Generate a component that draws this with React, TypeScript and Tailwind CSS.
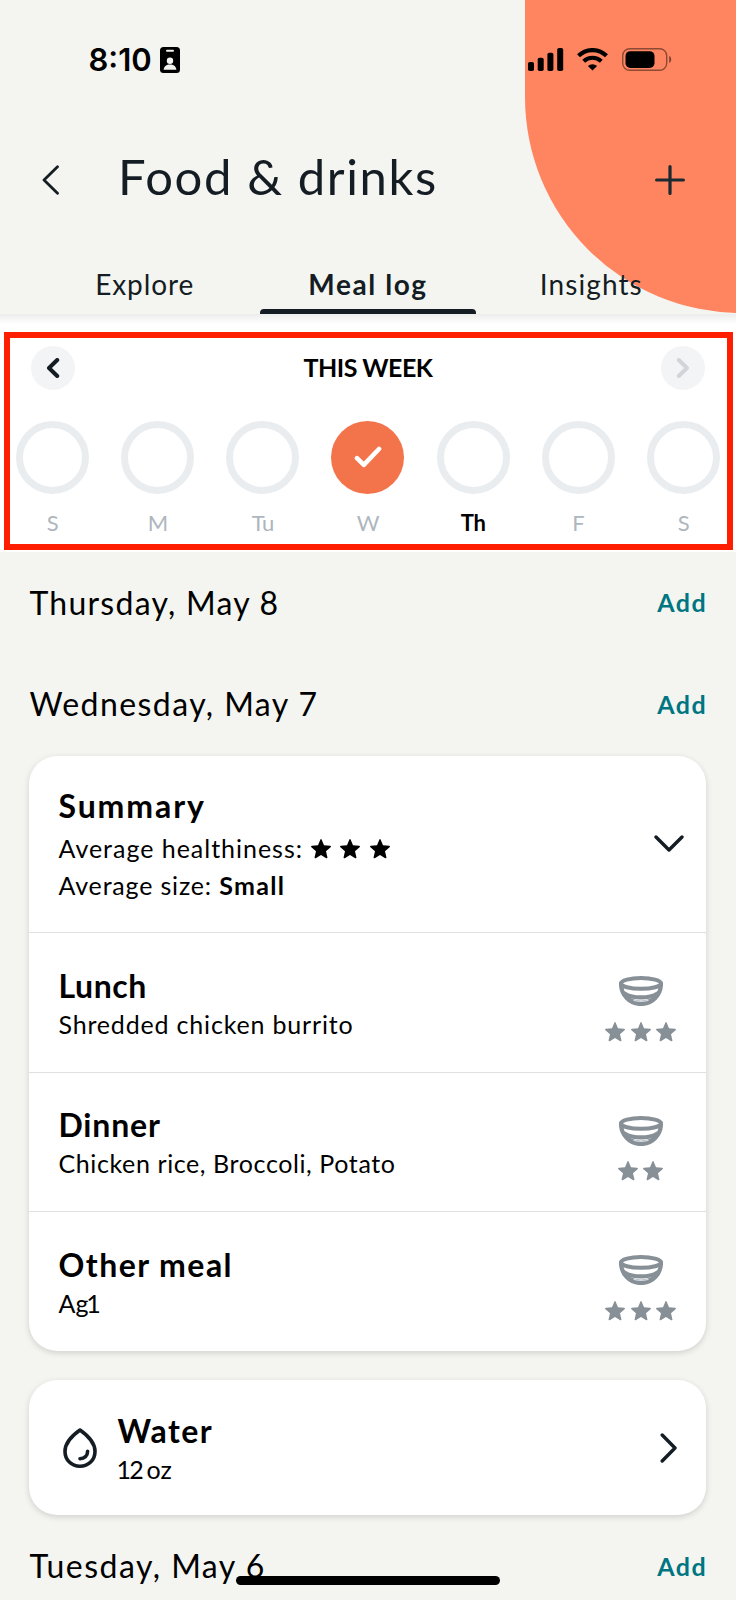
import type { ReactNode } from "react";

const STAR =
  "M10 .1c.35 0 .55.2.7.55l2.300 5.650 6.100.5c.9.1 1.150.9.5 1.450l-4.600 4 1.400 6c.2.85-.5 1.300-1.200.9L10 15.900l-5.200 3.250c-.7.4-1.400-.05-1.200-.9l1.400-6-4.600-4c-.65-.55-.4-1.350.5-1.450l6.100-.5L9.300.65C9.450.3 9.650.1 10 .1Z";

function Star({ className }: { className: string }) {
  return (
    <svg viewBox="0 0 20 20" className={`h-5 w-5 shrink-0 ${className}`} fill="currentColor">
      <path d={STAR} />
    </svg>
  );
}

function Bowl() {
  return (
    <svg viewBox="0 0 44 30" className="h-[30px] w-11 text-[#878f97]" fill="none" stroke="currentColor" strokeLinecap="round">
      <ellipse cx="22" cy="7.4" rx="20" ry="5.4" strokeWidth="4" />
      <path d="M2 7.5C2 19 10.500 28 22 28S42 19 42 7.500" strokeWidth="4.200" />
      <path d="M5.500 17.400C14 22.800 30 22.800 38.500 17.400" strokeWidth="4.200" />
      <path d="M10 23Q22 29 34 23" strokeWidth="2.600" />
      <path d="M15 24.400Q22 26.400 29 24.400" stroke="#d3d9df" strokeWidth="1.300" />
    </svg>
  );
}

function StatusBar() {
  return (
    <div className="flex h-[119px] items-center pl-[88.500px] pr-[64px]">
      <span className="font-['Inter',sans-serif] text-[31px] leading-10 font-semibold text-black">8:10</span>
      <svg viewBox="0 0 20 26" className="ml-[8px] h-[26px] w-5">
        <rect width="20" height="26" rx="3.500" fill="#000" />
        <rect x="6" y="2.800" width="8" height="2" rx="1" fill="#f4f5f0" />
        <circle cx="10" cy="13.800" r="3.200" fill="#f4f5f0" />
        <path d="M3.600 22.800c.4-3.400 3-5.200 6.400-5.200s6 1.800 6.400 5.200Z" fill="#f4f5f0" />
      </svg>
      <div className="ml-auto flex items-center">
        <svg viewBox="0 0 36 23" className="h-[23px] w-9" fill="#000">
          <rect x="0" y="14" width="6" height="9" rx="1.800" />
          <rect x="9.700" y="9.700" width="6" height="13.300" rx="1.800" />
          <rect x="19.400" y="4.800" width="6" height="18.200" rx="1.800" />
          <rect x="29.200" y="0" width="6" height="23" rx="1.800" />
        </svg>
        <svg viewBox="0 0 31 23" className="ml-[13px] h-[23px] w-[31px]" fill="none" stroke="#000">
          <path d="M1.500 7.800a20 20 0 0 1 28 0" strokeWidth="4.200" />
          <path d="M6.700 13.300a12.600 12.600 0 0 1 17.600 0" strokeWidth="4" />
          <path d="M15.500 22.600 10.900 18a6.600 6.600 0 0 1 9.200 0Z" fill="#000" stroke="none" />
        </svg>
        <svg viewBox="0 0 50 23" className="ml-[14px] h-[23px] w-[50px]">
          <rect x=".7" y=".7" width="44" height="21.600" rx="7" fill="none" stroke="#000" strokeOpacity=".45" strokeWidth="1.400" />
          <rect x="3.500" y="3.200" width="29" height="16.800" rx="4.800" fill="#000" />
          <path d="M47.200 8c1.300.5 2 1.800 2 3.400s-.7 2.900-2 3.400Z" fill="#000" fillOpacity=".5" />
        </svg>
      </div>
    </div>
  );
}

function Header() {
  return (
    <header className="relative z-10 h-[314px] overflow-hidden bg-[#f4f5f0] text-[#141d24]">
      <div className="absolute top-0 left-[524.5px] h-[312.5px] w-[432px] rounded-b-[216px] bg-[#ff8560]" />
      <div className="relative">
        <StatusBar />
        <div className="flex h-[110px] items-center pr-[51px] pl-[41px]">
          <svg viewBox="0 0 20 30" className="mt-[11px] h-[30px] w-5" fill="none" stroke="currentColor" strokeWidth="2.800" strokeLinecap="round" strokeLinejoin="round">
            <path d="M16.500 1.800 3 15l13.500 13.200" />
          </svg>
          <h1 className="mt-[3px] ml-[57px] text-[49px] leading-[60px] tracking-[1.600px]">Food &amp; drinks</h1>
          <svg viewBox="0 0 30 30" className="mt-[11px] ml-auto h-[30px] w-[30px]" fill="none" stroke="#1b2930" strokeWidth="3.200" strokeLinecap="round">
            <path d="M15 1.600v26.800M1.600 15h26.800" />
          </svg>
        </div>
        <nav className="mt-[23px] grid h-[62px] grid-cols-3 px-[33px] text-[28px] leading-[64px]">
          <span className="text-center tracking-[0.900px]">Explore</span>
          <span className="mx-1 flex flex-col items-stretch text-center font-bold tracking-[1.600px]">
            <span className="h-[57px]">Meal log</span>
            <span className="h-[5px] rounded-t-[4px] bg-[#141d24]" />
          </span>
          <span className="text-center tracking-[1.100px]">Insights</span>
        </nav>
      </div>
    </header>
  );
}

function NavCircle({ children }: { children: ReactNode }) {
  return <span className="flex h-11 w-11 items-center justify-center rounded-full bg-[#f3f4f6]">{children}</span>;
}

const DAYS = [
  { label: "S" },
  { label: "M" },
  { label: "Tu" },
  { label: "W", done: true },
  { label: "Th", today: true },
  { label: "F" },
  { label: "S" },
];

function Week() {
  return (
    <section className="relative h-[238px] bg-white pt-[31.500px]">
      <div className="absolute inset-x-0 top-0 h-[10px] bg-linear-to-b from-[#ececec] to-white" />
      <div className="relative flex items-center justify-between px-[31px]">
        <NavCircle>
          <svg viewBox="0 0 14 20" className="h-5 w-[14px]" fill="none" stroke="#141d24" strokeWidth="4" strokeLinecap="round" strokeLinejoin="round">
            <path d="M11.200 2 3 10l8.200 8" />
          </svg>
        </NavCircle>
        <span className="-mt-[2px] text-[25px] leading-[30px] font-bold tracking-[-0.500px] text-black">THIS WEEK</span>
        <NavCircle>
          <svg viewBox="0 0 14 20" className="h-5 w-[14px]" fill="none" stroke="#d1d5da" strokeWidth="4" strokeLinecap="round" strokeLinejoin="round">
            <path d="M2.800 2 11 10l-8.200 8" />
          </svg>
        </NavCircle>
      </div>
      <div className="mt-[31px] grid grid-cols-7">
        {DAYS.map((d, i) => (
          <div key={i} className="flex flex-col items-center">
            {d.done ? (
              <span className="flex h-[73px] w-[73px] items-center justify-center rounded-full bg-[#f3734a]">
                <svg viewBox="0 0 28 22" className="h-[22px] w-7" fill="none" stroke="#fff" strokeWidth="4.600" strokeLinecap="round" strokeLinejoin="round">
                  <path d="M3 12.200 9.800 18.800 25 3" />
                </svg>
              </span>
            ) : (
              <span className="h-[73px] w-[73px] rounded-full border-[7.500px] border-[#e9edf0]" />
            )}
            <span
              className={
                d.today
                  ? "mt-[17px] text-[22px] leading-6 font-bold tracking-[-0.300px] text-black"
                  : "mt-[17px] text-[22px] leading-6 tracking-[-0.400px] text-[#aeb6be]"
              }
            >
              {d.label}
            </span>
          </div>
        ))}
      </div>
      <div className="absolute top-[17.500px] left-1 h-[218px] w-[728.500px] border-6 border-[#ff1e00]" />
    </section>
  );
}

function DayHeading({ children, className }: { children: ReactNode; className: string }) {
  return (
    <div className={`flex items-center justify-between pr-[29px] pl-[29.500px] ${className}`}>
      <h2 className="pt-px text-[32px] leading-10 text-black">{children}</h2>
      <span className="text-[25px] leading-[30px] font-bold tracking-[1.400px] text-[#007582]">Add</span>
    </div>
  );
}

function Meal({ title, detail, stars }: { title: ReactNode; detail: ReactNode; stars: number }) {
  return (
    <div className="flex h-[139.670px] justify-between border-t border-[#dfe0e0] px-[29.500px]">
      <div className="pt-[30.500px]">
        <h3 className="text-[32px] leading-[44px] font-bold">{title}</h3>
        <p className="-mt-px text-[25px] leading-[34px]">{detail}</p>
      </div>
      <div className="flex w-[72px] flex-col items-center pt-[43px]">
        <Bowl />
        <div className="mt-[15.500px] flex gap-[5.700px]">
          {Array.from({ length: stars }, (_, i) => (
            <Star key={i} className="text-[#878f97]" />
          ))}
        </div>
      </div>
    </div>
  );
}

const CARD = "mr-[30px] ml-[29px] rounded-[28px] bg-white shadow-[0_2px_6px_rgba(0,0,0,0.15)]";

export default function App() {
  return (
    <div className="relative h-[1600px] w-[736px] overflow-hidden bg-[#f4f5f0] font-['Lato',sans-serif] text-black">
      <Header />
      <Week />

      <DayHeading className="h-[100px]">
        <span className="tracking-[1.250px]">Thursday, May 8</span>
      </DayHeading>
      <DayHeading className="h-[103.500px]">
        <span className="tracking-[1.430px]">Wednesday, May 7</span>
      </DayHeading>

      <div className={CARD}>
        <div className="flex h-[176.500px] items-center justify-between pr-[22px] pl-[29.500px]">
          <div className="-mt-px">
            <h3 className="text-[32px] leading-[48px] font-bold tracking-[1.900px]">Summary</h3>
            <div className="flex items-center text-[25px] leading-[37px]">
              <span className="tracking-[0.980px]">Average healthiness:</span>
              <span className="ml-[8px] flex gap-[9.300px] pt-px">
                <Star className="text-black" />
                <Star className="text-black" />
                <Star className="text-black" />
              </span>
            </div>
            <p className="text-[25px] leading-[37px] tracking-[0.820px]">
              Average size: <span className="font-bold tracking-[1.300px]">Small</span>
            </p>
          </div>
          <svg viewBox="0 0 30 17" className="h-[17px] w-[30px]" fill="none" stroke="#141d24" strokeWidth="3.400" strokeLinecap="round" strokeLinejoin="round">
            <path d="M2 2 15 15 28 2" />
          </svg>
        </div>
        <Meal
          title={<span className="tracking-[0.600px]">Lunch</span>}
          detail={<span className="tracking-[0.820px]">Shredded chicken burrito</span>}
          stars={3}
        />
        <Meal
          title={<span className="tracking-[0.800px]">Dinner</span>}
          detail={<span className="tracking-[0.600px]">Chicken rice, Broccoli, Potato</span>}
          stars={2}
        />
        <Meal
          title={<span className="tracking-[1.450px]">Other meal</span>}
          detail={<>A<span className="tracking-[-2.200px]">g1</span></>}
          stars={3}
        />
      </div>

      <div className={`${CARD} mt-[29.500px] flex h-[135px] items-center pr-[28px] pl-[34px]`}>
        <svg viewBox="0 0 34 40" className="h-10 w-[34px]" fill="none" stroke="#141d24" strokeWidth="3.600" strokeLinecap="round" strokeLinejoin="round">
          <path d="M17 2C12 5.500 2 13.500 2 23.500 2 32 8.500 38.200 17 38.200S32 32 32 23.500C32 13.500 22 5.500 17 2Z" />
          <path d="M24.600 23.200c0 4.600-3.200 7.200-7.600 7.500" />
        </svg>
        <div className="ml-[20.500px]">
          <h3 className="text-[32px] leading-[44px] font-bold tracking-[1.400px]">Water</h3>
          <p className="-mt-px text-[25px] leading-[34px]"><span className="-ml-px tracking-[-1.800px]">12 </span>oz</p>
        </div>
        <svg viewBox="0 0 18 30" className="ml-auto h-[30px] w-[18px]" fill="none" stroke="#141d24" strokeWidth="3.400" strokeLinecap="round" strokeLinejoin="round">
          <path d="M2.200 2 15 15 2.200 28" />
        </svg>
      </div>

      <DayHeading className="h-[101px]">
        <span className="tracking-[1.480px]">Tuesday, May 6</span>
      </DayHeading>

      <div className="absolute top-[1576px] left-[236px] h-[9px] w-[264px] rounded-full bg-black" />
    </div>
  );
}
